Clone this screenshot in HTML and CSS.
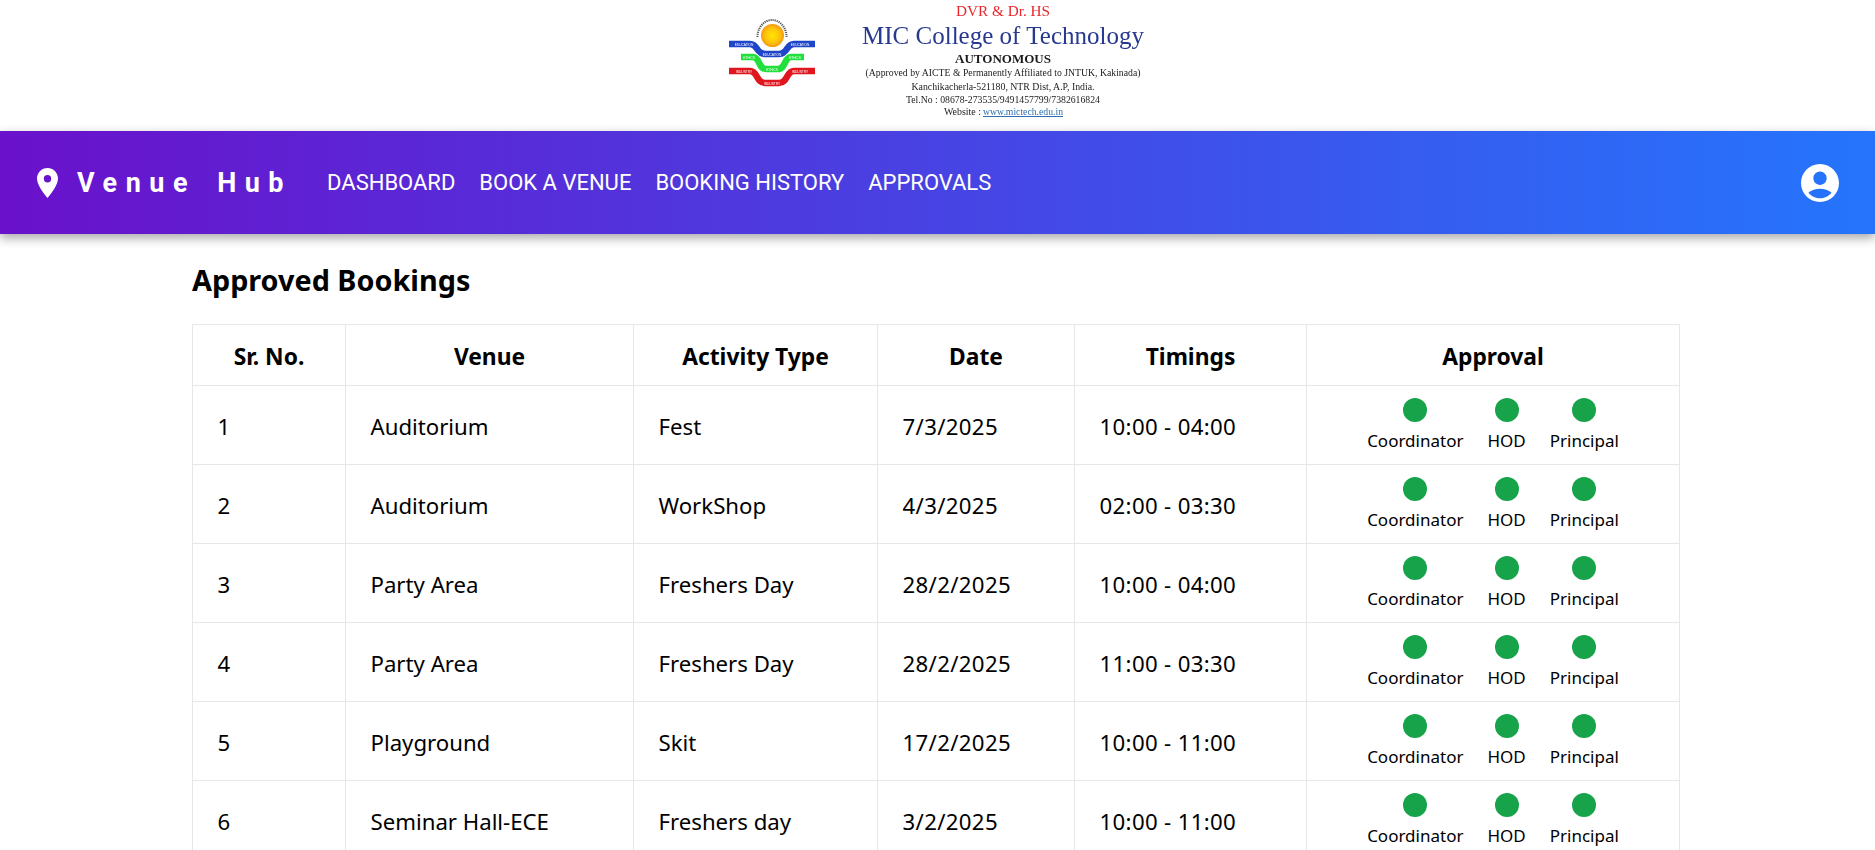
FILE: index.html
```html
<!DOCTYPE html>
<html lang="en">
<head>
<meta charset="utf-8">
<title>Venue Hub</title>
<link rel="stylesheet" href="styles.css">
</head>
<body>
<header class="letterhead">
  <svg class="logo" viewBox="700 0 480 131" width="480" height="131" xmlns="http://www.w3.org/2000/svg">
    <defs>
      <radialGradient id="sun" cx="50%" cy="50%" r="50%">
        <stop offset="0%" stop-color="#ffe600"/>
        <stop offset="65%" stop-color="#fdc20c"/>
        <stop offset="100%" stop-color="#f39a12"/>
      </radialGradient>
    </defs>
    <circle cx="772.5" cy="35.5" r="11.5" fill="url(#sun)"/>
    <path class="ring" d="M757.5 37 A14.5 17 0 0 1 786.5 37"/>
    <path class="band" stroke="#1f46c8" d="M729 44 H750 C758 44 756 54 765 54 H779 C788 54 786 44 794 44 H815"/>
    <path class="band" stroke="#22e03c" d="M741 57 H753 C760 57 758 69 766 69 H778 C786 69 784 57 791 57 H804"/>
    <path class="band" stroke="#e0161e" d="M729 71 H750 C758 71 756 83 765 83 H779 C788 83 786 71 794 71 H815"/>
    <text class="logo-tiny" x="744" y="45.5" text-anchor="middle">EDUCATION</text>
    <text class="logo-tiny" x="772" y="55.5" text-anchor="middle">EDUCATION</text>
    <text class="logo-tiny" x="800" y="45.5" text-anchor="middle">EDUCATION</text>
    <text class="logo-tiny" x="749" y="58.5" text-anchor="middle">ETHICS</text>
    <text class="logo-tiny" x="772" y="70.5" text-anchor="middle">ETHICS</text>
    <text class="logo-tiny" x="795" y="58.5" text-anchor="middle">ETHICS</text>
    <text class="logo-tiny" x="744" y="72.5" text-anchor="middle">INDUSTRY</text>
    <text class="logo-tiny" x="772" y="84.5" text-anchor="middle">INDUSTRY</text>
    <text class="logo-tiny" x="800" y="72.5" text-anchor="middle">INDUSTRY</text>
    <g class="logo-text">
      <text class="l-red" x="1003" y="16" text-anchor="middle" textLength="94" lengthAdjust="spacingAndGlyphs">DVR &amp; Dr. HS</text>
      <text class="l-name" x="1003" y="44" text-anchor="middle" textLength="282" lengthAdjust="spacingAndGlyphs">MIC College of Technology</text>
      <text class="l-auto" x="1003" y="63" text-anchor="middle" textLength="96" lengthAdjust="spacingAndGlyphs">AUTONOMOUS</text>
      <text class="l-small" x="1003" y="76" text-anchor="middle" textLength="275" lengthAdjust="spacingAndGlyphs">(Approved by AICTE &amp; Permanently Affiliated to JNTUK, Kakinada)</text>
      <text class="l-small" x="1003" y="90" text-anchor="middle" textLength="183" lengthAdjust="spacingAndGlyphs">Kanchikacherla-521180, NTR Dist, A.P, India.</text>
      <text class="l-small" x="1003" y="103" text-anchor="middle" textLength="194" lengthAdjust="spacingAndGlyphs">Tel.No : 08678-273535/9491457799/7382616824</text>
      <text class="l-small" x="944" y="115" textLength="37" lengthAdjust="spacingAndGlyphs">Website :</text>
      <text class="l-link" x="983" y="115" textLength="80" lengthAdjust="spacingAndGlyphs">www.mictech.edu.in</text>
    </g>
  </svg>
</header>

<nav class="navbar">
  <div class="brand">
    <svg class="pin" viewBox="0 0 21 30" width="21" height="30" xmlns="http://www.w3.org/2000/svg">
      <path fill="#fff" fill-rule="evenodd" d="M10.5 0C4.7 0 0 4.7 0 10.5 0 16.5 6.3 25 10.5 30 14.7 25 21 16.5 21 10.5 21 4.7 16.3 0 10.5 0zm0 7a3.7 3.7 0 1 1 0 7.4 3.7 3.7 0 0 1 0-7.4z"/>
    </svg>
    <span class="brand-name">Venue Hub</span>
  </div>
  <ul class="nav-links">
    <li><a href="#">Dashboard</a></li>
    <li><a href="#">Book a Venue</a></li>
    <li><a href="#">Booking History</a></li>
    <li><a href="#">Approvals</a></li>
  </ul>
  <svg class="account" viewBox="2 2 20 20" xmlns="http://www.w3.org/2000/svg">
    <path fill="#fff" d="M12 2C6.48 2 2 6.48 2 12s4.48 10 10 10 10-4.48 10-10S17.52 2 12 2zm0 4c1.93 0 3.5 1.57 3.5 3.5S13.93 13 12 13s-3.5-1.57-3.5-3.5S10.07 6 12 6zm0 14c-2.03 0-4.43-.82-6.14-2.88C7.55 15.8 9.68 15 12 15s4.45.8 6.14 2.12C16.43 19.18 14.03 20 12 20z"/>
  </svg>
</nav>

<main class="content">
  <h1 class="title">Approved Bookings</h1>
  <table class="bookings">
    <thead>
      <tr>
        <th class="c-sr">Sr. No.</th>
        <th class="c-venue">Venue</th>
        <th class="c-type">Activity Type</th>
        <th class="c-date">Date</th>
        <th class="c-time">Timings</th>
        <th class="c-appr">Approval</th>
      </tr>
    </thead>
    <tbody>
      <tr><td>1</td><td>Auditorium</td><td>Fest</td><td class="num">7/3/2025</td><td class="num">10:00 - 04:00</td><td><div class="approval"><div class="step"><span class="dot"></span><span class="who">Coordinator</span></div><div class="step"><span class="dot"></span><span class="who">HOD</span></div><div class="step"><span class="dot"></span><span class="who">Principal</span></div></div></td></tr>
      <tr><td>2</td><td>Auditorium</td><td>WorkShop</td><td class="num">4/3/2025</td><td class="num">02:00 - 03:30</td><td><div class="approval"><div class="step"><span class="dot"></span><span class="who">Coordinator</span></div><div class="step"><span class="dot"></span><span class="who">HOD</span></div><div class="step"><span class="dot"></span><span class="who">Principal</span></div></div></td></tr>
      <tr><td>3</td><td>Party Area</td><td>Freshers Day</td><td class="num">28/2/2025</td><td class="num">10:00 - 04:00</td><td><div class="approval"><div class="step"><span class="dot"></span><span class="who">Coordinator</span></div><div class="step"><span class="dot"></span><span class="who">HOD</span></div><div class="step"><span class="dot"></span><span class="who">Principal</span></div></div></td></tr>
      <tr><td>4</td><td>Party Area</td><td>Freshers Day</td><td class="num">28/2/2025</td><td class="num">11:00 - 03:30</td><td><div class="approval"><div class="step"><span class="dot"></span><span class="who">Coordinator</span></div><div class="step"><span class="dot"></span><span class="who">HOD</span></div><div class="step"><span class="dot"></span><span class="who">Principal</span></div></div></td></tr>
      <tr><td>5</td><td>Playground</td><td>Skit</td><td class="num">17/2/2025</td><td class="num">10:00 - 11:00</td><td><div class="approval"><div class="step"><span class="dot"></span><span class="who">Coordinator</span></div><div class="step"><span class="dot"></span><span class="who">HOD</span></div><div class="step"><span class="dot"></span><span class="who">Principal</span></div></div></td></tr>
      <tr><td>6</td><td>Seminar Hall-ECE</td><td>Freshers day</td><td class="num">3/2/2025</td><td class="num">10:00 - 11:00</td><td><div class="approval"><div class="step"><span class="dot"></span><span class="who">Coordinator</span></div><div class="step"><span class="dot"></span><span class="who">HOD</span></div><div class="step"><span class="dot"></span><span class="who">Principal</span></div></div></td></tr>
    </tbody>
  </table>
</main>
</body>
</html>
```

FILE: styles.css
```css
* { box-sizing: border-box; }

html, body {
  margin: 0;
  padding: 0;
  background: #fff;
  color: #000;
  font-family: "Noto Sans", "Open Sans", sans-serif;
}

.letterhead {
  display: flex;
  justify-content: center;
  height: 131px;
  padding-left: 5px;
  background: #fff;
}

.logo { display: block; filter: blur(0.45px); }
.logo-text text { font-family: "Liberation Serif", serif; }
.l-red { font-size: 15px; fill: #e8262c; }
.l-name { font-size: 26px; fill: #27388f; }
.l-auto { font-size: 13px; font-weight: 700; fill: #1c1c1c; }
.l-small { font-size: 11px; fill: #222; }
.l-link { font-size: 11px; fill: #2f6fb0; text-decoration: underline; }
.band { fill: none; stroke-width: 6.5; }
.ring { fill: none; stroke: #555; stroke-width: 2; stroke-dasharray: 1.2 0.9; }
.logo-tiny { font-family: "Liberation Sans", sans-serif; font-size: 3.2px; fill: #fff; }

.navbar {
  display: flex;
  align-items: center;
  position: relative;
  height: 103px;
  padding: 0 36px 0 37px;
  background: linear-gradient(90deg, #6a11cb 0%, #2575fc 100%);
  box-shadow: 0 4px 10px rgba(0, 0, 0, 0.35);
}

.brand { display: flex; align-items: center; gap: 19px; margin-right: 35px; }
.pin { display: block; }
.brand-name {
  font-family: Roboto, sans-serif;
  font-weight: 700;
  font-size: 27px;
  letter-spacing: 8.5px;
  word-spacing: 6px;
  color: #fff;
  white-space: nowrap;
}

.nav-links { display: flex; gap: 24px; list-style: none; margin: 0; padding: 0; }
.nav-links a {
  font-family: Roboto, sans-serif;
  font-size: 22px;
  font-weight: 400;
  color: #fff;
  text-transform: uppercase;
  text-decoration: none;
  white-space: nowrap;
}

.account { display: block; width: 38px; height: 38px; margin-left: auto; }

.content { padding: 0 195px 0 192px; }

.title {
  margin: 0;
  padding-top: 27px;
  height: 90px;
  font-size: 28.8px;
  line-height: 38px;
  font-weight: 700;
}

.bookings {
  width: 100%;
  table-layout: fixed;
  border-collapse: collapse;
  font-size: 22.2px;
}

.bookings th, .bookings td { border: 1px solid #e5e7eb; }
.bookings th { height: 61px; padding: 2px 8px 0; text-align: center; font-weight: 700; font-size: 22.8px; }
.bookings td { height: 79px; padding: 2px 24px 0 24.5px; text-align: left; }
.bookings td:last-child { padding: 0; }
.bookings .num { letter-spacing: 0.35px; }

.c-sr { width: 153px; }
.c-venue { width: 288px; }
.c-type { width: 244px; }
.c-date { width: 197px; }
.c-time { width: 232px; }
.c-appr { width: auto; }

.approval { display: flex; justify-content: center; gap: 24px; }
.step { display: flex; flex-direction: column; align-items: center; gap: 8px; }
.dot { display: block; width: 24px; height: 24px; border-radius: 50%; background: #16a34a; }
.who { font-size: 17px; line-height: 22px; white-space: nowrap; }
```
